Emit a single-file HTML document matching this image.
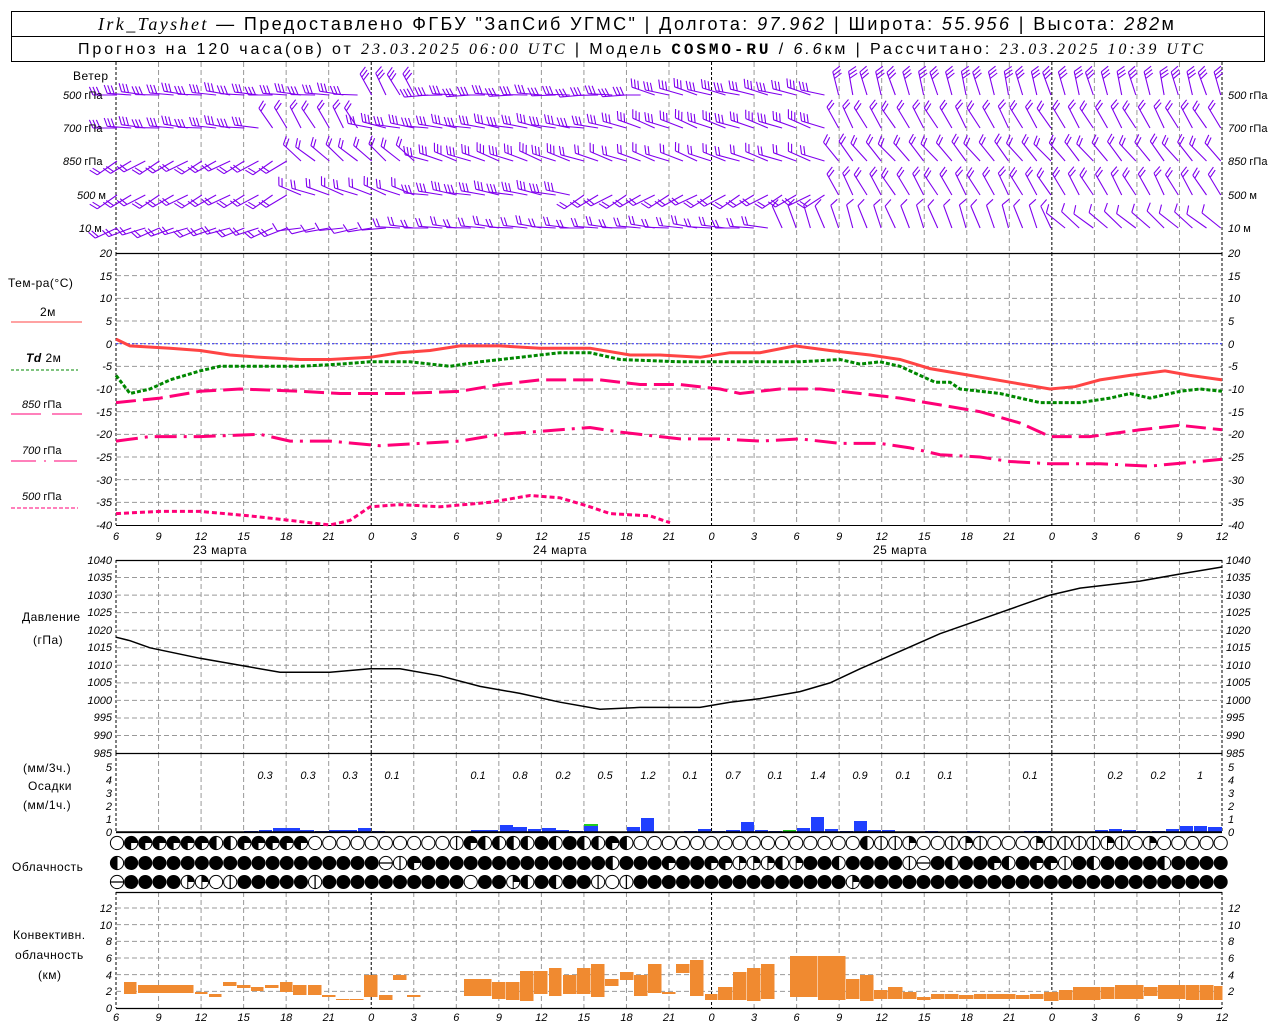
<!DOCTYPE html>
<html><head><meta charset="utf-8">
<style>
html,body{margin:0;padding:0;background:#fff;}
svg{display:block;font-family:"Liberation Sans",sans-serif;}
.t{font-size:11px;font-style:italic;fill:#000;}
.l{font-size:12px;fill:#000;letter-spacing:0.5px;}
</style></head><body>
<svg id="s" width="1280" height="1024" viewBox="0 0 1280 1024" xmlns="http://www.w3.org/2000/svg">
<rect x="0" y="0" width="1280" height="1024" fill="#fff"/>
<!-- header -->
<rect x="11.5" y="11.5" width="1253" height="50" fill="none" stroke="#000"/>
<line x1="11" y1="36.5" x2="1265" y2="36.5" stroke="#000"/>
<text x="98" y="30" font-size="18" fill="#000" letter-spacing="2.4"><tspan font-family="Liberation Serif" font-style="italic">Irk_Tayshet</tspan> — Предоставлено ФГБУ "ЗапСиб УГМС" | Долгота: <tspan font-style="italic">97.962</tspan> | Широта: <tspan font-style="italic">55.956</tspan> | Высота: <tspan font-style="italic">282</tspan>м</text>
<text x="78" y="54" font-size="16" fill="#000" letter-spacing="2.9">Прогноз на 120 часа(ов) от <tspan font-family="Liberation Serif" font-style="italic">23.03.2025 06:00 UTC</tspan>  | Модель <tspan font-family="Liberation Mono" font-weight="bold">COSMO-RU</tspan> / <tspan font-style="italic">6.6</tspan>км | Рассчитано: <tspan font-family="Liberation Serif" font-style="italic">23.03.2025 10:39 UTC</tspan></text>
<g id="grid"></g>
<g id="data"></g>
<!-- wind labels -->
<text class="l" x="73" y="80">Ветер</text>
<g class="t"><text x="63" y="99">500 <tspan font-style="normal">гПа</tspan></text><text x="63" y="132">700 <tspan font-style="normal">гПа</tspan></text><text x="63" y="165">850 <tspan font-style="normal">гПа</tspan></text><text x="77" y="199">500 <tspan font-style="normal">м</tspan></text><text x="79" y="232">10 <tspan font-style="normal">  м</tspan></text>
<text x="1228" y="99">500 <tspan font-style="normal">гПа</tspan></text><text x="1228" y="132">700 <tspan font-style="normal">гПа</tspan></text><text x="1228" y="165">850 <tspan font-style="normal">гПа</tspan></text><text x="1228" y="199">500 <tspan font-style="normal">м</tspan></text><text x="1228" y="232">10 <tspan font-style="normal">  м</tspan></text></g>
<!-- temp labels -->
<text class="l" x="8" y="287">Тем-ра(°C)</text>
<text class="l" x="40" y="316" font-size="11">2м</text>
<line x1="11" y1="322" x2="82" y2="322" stroke="#f44"/>
<text class="l" x="26" y="362" font-size="11"><tspan font-style="italic" font-weight="bold">Td</tspan>  2м</text>
<line x1="11" y1="370" x2="78" y2="370" stroke="#080" stroke-dasharray="3,2"/>
<text class="t" x="22" y="408">850 <tspan font-style="normal">гПа</tspan></text>
<line x1="11" y1="414" x2="41" y2="414" stroke="#f07"/><line x1="52" y1="414" x2="82" y2="414" stroke="#f07"/>
<text class="t" x="22" y="454">700 <tspan font-style="normal">гПа</tspan></text>
<line x1="11" y1="461" x2="77" y2="461" stroke="#f07" stroke-dasharray="25,8,2,8"/>
<text class="t" x="22" y="500">500 <tspan font-style="normal">гПа</tspan></text>
<line x1="11" y1="508" x2="78" y2="508" stroke="#f07" stroke-dasharray="4,2"/>
<g class="t" text-anchor="end"><text x="112" y="257">20</text><text x="112" y="280">15</text><text x="112" y="302">10</text><text x="112" y="325">5</text><text x="112" y="348">0</text><text x="112" y="370">-5</text><text x="112" y="393">-10</text><text x="112" y="416">-15</text><text x="112" y="438">-20</text><text x="112" y="461">-25</text><text x="112" y="484">-30</text><text x="112" y="506">-35</text><text x="112" y="529">-40</text></g>
<g class="t"><text x="1228" y="257">20</text><text x="1228" y="280">15</text><text x="1228" y="302">10</text><text x="1228" y="325">5</text><text x="1228" y="348">0</text><text x="1228" y="370">-5</text><text x="1228" y="393">-10</text><text x="1228" y="416">-15</text><text x="1228" y="438">-20</text><text x="1228" y="461">-25</text><text x="1228" y="484">-30</text><text x="1228" y="506">-35</text><text x="1228" y="529">-40</text></g>
<g class="t" font-size="14" text-anchor="middle"><text x="116" y="540">6</text><text x="158.5" y="540">9</text><text x="201" y="540">12</text><text x="243.6" y="540">15</text><text x="286.2" y="540">18</text><text x="328.7" y="540">21</text><text x="371.2" y="540">0</text><text x="413.8" y="540">3</text><text x="456.3" y="540">6</text><text x="498.9" y="540">9</text><text x="541.4" y="540">12</text><text x="583.9" y="540">15</text><text x="626.5" y="540">18</text><text x="669" y="540">21</text><text x="711.6" y="540">0</text><text x="754.1" y="540">3</text><text x="796.6" y="540">6</text><text x="839.2" y="540">9</text><text x="881.7" y="540">12</text><text x="924.3" y="540">15</text><text x="966.8" y="540">18</text><text x="1009.3" y="540">21</text><text x="1051.9" y="540">0</text><text x="1094.4" y="540">3</text><text x="1137" y="540">6</text><text x="1179.5" y="540">9</text><text x="1222" y="540">12</text></g>
<g class="l" font-size="13" text-anchor="middle" letter-spacing="1.5"><text x="220" y="554">23 марта</text><text x="560" y="554">24 марта</text><text x="900" y="554">25 марта</text></g>
<!-- pressure -->
<text class="l" x="22" y="621">Давление</text><text class="l" x="33" y="644">(гПа)</text>
<g class="t" font-size="10" text-anchor="end"><text x="112" y="564">1040</text><text x="112" y="581">1035</text><text x="112" y="599">1030</text><text x="112" y="616">1025</text><text x="112" y="634">1020</text><text x="112" y="651">1015</text><text x="112" y="669">1010</text><text x="112" y="686">1005</text><text x="112" y="704">1000</text><text x="112" y="721">995</text><text x="112" y="739">990</text><text x="112" y="757">985</text></g>
<g class="t" font-size="10"><text x="1226" y="564">1040</text><text x="1226" y="581">1035</text><text x="1226" y="599">1030</text><text x="1226" y="616">1025</text><text x="1226" y="634">1020</text><text x="1226" y="651">1015</text><text x="1226" y="669">1010</text><text x="1226" y="686">1005</text><text x="1226" y="704">1000</text><text x="1226" y="721">995</text><text x="1226" y="739">990</text><text x="1226" y="757">985</text></g>
<!-- precip -->
<text class="l" x="23" y="772">(мм/3ч.)</text><text class="l" x="28" y="790">Осадки</text><text class="l" x="23" y="809">(мм/1ч.)</text>
<g class="t" font-size="10" text-anchor="end"><text x="112" y="771">5</text><text x="112" y="784">4</text><text x="112" y="797">3</text><text x="112" y="810">2</text><text x="112" y="823">1</text><text x="112" y="836">0</text></g>
<g class="t" font-size="10"><text x="1228" y="771">5</text><text x="1228" y="784">4</text><text x="1228" y="797">3</text><text x="1228" y="810">2</text><text x="1228" y="823">1</text><text x="1228" y="836">0</text></g>
<g class="t" font-size="13" text-anchor="middle"><text x="265" y="779">0.3</text><text x="308" y="779">0.3</text><text x="350" y="779">0.3</text><text x="392" y="779">0.1</text><text x="478" y="779">0.1</text><text x="520" y="779">0.8</text><text x="563" y="779">0.2</text><text x="605" y="779">0.5</text><text x="648" y="779">1.2</text><text x="690" y="779">0.1</text><text x="733" y="779">0.7</text><text x="775" y="779">0.1</text><text x="818" y="779">1.4</text><text x="860" y="779">0.9</text><text x="903" y="779">0.1</text><text x="945" y="779">0.1</text><text x="1030" y="779">0.1</text><text x="1115" y="779">0.2</text><text x="1158" y="779">0.2</text><text x="1200" y="779">1</text></g>
<text class="l" x="12" y="871">Облачность</text>
<!-- conv -->
<text class="l" x="13" y="939">Конвективн.</text><text class="l" x="15" y="959">облачность</text><text class="l" x="38" y="979">(км)</text>
<g class="t" font-size="10" text-anchor="end"><text x="112" y="912">12</text><text x="112" y="929">10</text><text x="112" y="945">8</text><text x="112" y="962">6</text><text x="112" y="979">4</text><text x="112" y="995">2</text><text x="112" y="1012">0</text></g>
<g class="t" font-size="10"><text x="1228" y="912">12</text><text x="1228" y="929">10</text><text x="1228" y="945">8</text><text x="1228" y="962">6</text><text x="1228" y="979">4</text><text x="1228" y="995">2</text></g>
<g class="t" font-size="14" text-anchor="middle"><text x="116" y="1021">6</text><text x="158.5" y="1021">9</text><text x="201" y="1021">12</text><text x="243.6" y="1021">15</text><text x="286.2" y="1021">18</text><text x="328.7" y="1021">21</text><text x="371.2" y="1021">0</text><text x="413.8" y="1021">3</text><text x="456.3" y="1021">6</text><text x="498.9" y="1021">9</text><text x="541.4" y="1021">12</text><text x="583.9" y="1021">15</text><text x="626.5" y="1021">18</text><text x="669" y="1021">21</text><text x="711.6" y="1021">0</text><text x="754.1" y="1021">3</text><text x="796.6" y="1021">6</text><text x="839.2" y="1021">9</text><text x="881.7" y="1021">12</text><text x="924.3" y="1021">15</text><text x="966.8" y="1021">18</text><text x="1009.3" y="1021">21</text><text x="1051.9" y="1021">0</text><text x="1094.4" y="1021">3</text><text x="1137" y="1021">6</text><text x="1179.5" y="1021">9</text><text x="1222" y="1021">12</text></g>
</svg>
<script>
(function(){
var NS="http://www.w3.org/2000/svg",G=document.getElementById('grid'),D=document.getElementById('data');
function el(p,t,a){var e=document.createElementNS(NS,t);for(var k in a)e.setAttribute(k,a[k]);p.appendChild(e);return e;}
function ln(p,x1,y1,x2,y2,c,w,da){var a={x1:x1,y1:y1,x2:x2,y2:y2,stroke:c,'stroke-width':w||1};if(da)a['stroke-dasharray']=da;return el(p,'line',a);}
var X0=116,X1=1222,DX=(X1-X0)/26;
var panels=[[62,253],[253,525],[560,753],[753,832],[892,1008]];
for(var k=0;k<=26;k++){var x=X0+k*DX;
 panels.forEach(function(p){ if(k%8==6){ln(G,x,p[0],x,p[1],'#000',1,'3,2');} else if(k==0||k==26){ln(G,x,p[0],x,p[1],'#000',1,'3,2');} else ln(G,x,p[0],x,p[1],'#999',1,'5,3');});
}
for(var t=15;t>=-35;t-=5){var y=253+(20-t)*4.533;ln(G,X0,y,X1,y,'#999',1,'5,3');}
for(var i=1;i<11;i++){var y=560+i*17.55;ln(G,X0,y,X1,y,'#999',1,'5,3');}
for(var i=1;i<7;i++){var y=1008-i*16.67;ln(G,X0,y,X1,y,'#999',1,'5,3');}
[253,560,753,832,892,1008].forEach(function(y){ln(G,X0,y+0.5,X1,y+0.5,'#000',1.3);});
ln(G,X0,525.5,X1,525.5,'#000',1);
ln(D,X0,343.7,X1,343.7,'#33f',1,'2,2');
function poly(pts,fy,c,w,da){var s=pts.map(function(p){return p[0]+','+fy(p[1]).toFixed(1);}).join(' ');var a={points:s,fill:'none',stroke:c,'stroke-width':w};if(da)a['stroke-dasharray']=da;el(D,'polyline',a);}
var ty=function(t){return 253+(20-t)*4.533;};
poly([[116,1],[130,-0.5],[170,-1],[200,-1.5],[230,-2.5],[260,-3],[300,-3.5],[330,-3.5],[370,-3],[400,-2],[430,-1.5],[460,-0.5],[500,-0.5],[540,-1],[590,-1],[630,-2.5],[660,-2.5],[700,-3],[730,-2],[760,-2],[795,-0.5],[830,-1.5],[870,-2.5],[900,-3.5],[930,-5.5],[970,-7],[1010,-8.5],[1050,-10],[1075,-9.5],[1100,-8],[1130,-7],[1165,-6],[1190,-7],[1222,-8]],ty,'#f44',3);
poly([[116,-7],[130,-11],[150,-10],[170,-8],[200,-6],[220,-5],[260,-5],[300,-5],[340,-4.5],[370,-4],[410,-4],[450,-5],[480,-4],[520,-3],[560,-2],[590,-2],[620,-3.5],[680,-4],[720,-4],[760,-4],[800,-4],[840,-3.5],[860,-4.5],[880,-4],[900,-5],[920,-7],[935,-8.5],[950,-8.5],[960,-10],[1000,-11],[1040,-13],[1080,-13],[1110,-12],[1130,-11],[1150,-12],[1180,-10.5],[1200,-10],[1222,-10.5]],ty,'#080',3,'4,2');
poly([[116,-13],[160,-12],[200,-10.5],[240,-10],[300,-10.5],[340,-11],[400,-11],[460,-10.5],[500,-9],[540,-8],[600,-8],[640,-9],[680,-9],[720,-10],[740,-11],[780,-10],[820,-10],[860,-11],[900,-12],[940,-13.5],[980,-15],[1020,-17.5],[1050,-20.5],[1090,-20.5],[1140,-19],[1180,-18],[1222,-19]],ty,'#f07',3,'20,7');
poly([[116,-21.5],[150,-20.5],[200,-20.5],[260,-20],[290,-21.5],[330,-21.5],[380,-22.5],[420,-22],[460,-21.5],[500,-20],[560,-19],[590,-18.5],[620,-19.5],[680,-21],[720,-21],[760,-21.5],[800,-21],[840,-22],[880,-22],[910,-23],[940,-24.5],[980,-25],[1010,-26],[1050,-26.5],[1100,-26.5],[1150,-27],[1222,-25.5]],ty,'#f07',3,'22,7,3,7');
poly([[116,-37.5],[160,-37],[200,-37],[250,-38],[290,-39],[330,-40],[350,-39],[370,-36],[400,-35.5],[440,-36],[490,-35],[530,-33.5],[560,-34],[590,-36],[610,-37.5],[650,-38],[670,-39.5]],ty,'#f07',3,'5,3');
poly([[116,1018],[130,1017],[150,1015],[200,1012],[240,1010],[280,1008],[330,1008],[370,1009],[400,1009],[440,1007],[480,1004],[520,1002],[560,999.5],[600,997.5],[640,998],[700,998],[730,999.5],[760,1000.5],[800,1002.5],[830,1005],[860,1009],[900,1014],[940,1019],[980,1023],[1020,1027],[1050,1030],[1080,1032],[1110,1033],[1140,1034],[1180,1036],[1222,1038]],function(p){return 560+(1040-p)*3.51;},'#000',1.5);
var pb=[[244,258,831],[259,272,830],[273,300,828],[300,314,830],[315,329,831],[329,343,830],[343,357,830],[358,371,828],[372,385,831],[471,485,830],[485,498,830],[500,513,825],[513,527,827],[528,541,829],[542,556,828],[556,569,830],[570,583,831],[584,598,826],[627,640,827],[641,654,818],[684,697,831],[698,711,829],[712,725,831],[726,740,830],[741,754,822],[755,768,830],[769,782,831],[797,810,828],[811,824,817],[825,838,829],[840,853,831],[854,867,821],[868,881,830],[882,895,830],[925,938,831],[967,980,831],[1024,1037,831],[1038,1051,831],[1095,1108,830],[1109,1122,829],[1123,1136,830],[1137,1150,831],[1152,1165,831],[1166,1179,829],[1180,1193,826],[1194,1207,826],[1208,1222,827]];
pb.forEach(function(b){el(D,'rect',{x:b[0],y:b[2],width:b[1]-b[0],height:832-b[2],fill:'#2040ff'});});
el(D,'rect',{x:584,y:824,width:14,height:2,fill:'#2c2'});
el(D,'rect',{x:783,y:830,width:13,height:2,fill:'#2c2'});
ln(D,X0,832,X1,832,'#000',1.5);
var cb=[[124,137,982,994],[138,194,985,993],[195,208,992,994],[209,222,994,997],[223,237,982,986],[237,251,985,988],[251,264,987,991],[265,279,985,988],[280,293,982,992],[293,307,985,995],[308,322,985,995],[322,336,995,997],[336,350,999,1000],[350,364,999,1000],[364,378,975,997],[379,393,995,1000],[393,407,975,980],[407,421,995,997],[464,492,979,996],[492,506,982,999],[506,520,982,1000],[520,534,971,1001],[534,548,971,994],[549,562,968,996],[563,577,975,994],[577,591,968,994],[591,605,964,997],[605,619,979,986],[620,634,972,980],[634,648,975,996],[648,662,964,993],[662,676,992,994],[676,690,964,973],[690,704,960,996],[705,718,994,1000],[718,733,987,1000],[733,747,972,1000],[747,761,968,1001],[761,775,964,999],[790,818,956,997],[818,846,956,1000],[846,860,979,999],[860,874,975,1001],[874,888,990,999],[888,903,987,999],[903,917,992,999],[917,931,997,1000],[931,945,994,999],[945,959,994,999],[959,974,995,999],[974,987,994,999],[987,1016,994,999],[1016,1030,995,999],[1030,1044,994,999],[1044,1059,992,1001],[1059,1073,990,1000],[1073,1101,987,1000],[1101,1115,987,999],[1115,1144,985,999],[1144,1158,987,996],[1158,1186,985,999],[1186,1200,985,1000],[1200,1214,985,1000],[1214,1223,986,1000]];
cb.forEach(function(b){el(D,'rect',{x:b[0],y:b[2],width:b[1]-b[0]-0.5,height:b[3]-b[2],fill:'#f08a30'});});
var rows=["otttttthhtttttoooooooooovthhhhxhxhhthoooooooooooooooohvvqoovqvoooqvvvvqvoqoooooooo",
"hxxxxxxxxxxxxxxxxxxevtxxxxxxxxxxxxxhxxxtxxttqqqhqxxhxxxxvexhxxthxttvxhxxxxhxxxxxx",
"exxxxqqovxxxxxvxxxxxxxxxxoxxqhxhxxvovxxxxxxxxxxxxxxxqxxxxxxxxxxxxxxxxxxxxxxxxxx"];
var ry=[843,863,882];
for(var r=0;r<3;r++){for(var i=0;i<79;i++){var cx=117+i*14.15,cy=ry[r],R=6.6,c=rows[r].charAt(i)||'x';
 var g=el(D,'g',{});
 if(c=='x'){el(g,'circle',{cx:cx,cy:cy,r:R+0.4,fill:'#000'});continue;}
 el(g,'circle',{cx:cx,cy:cy,r:R,fill:'#fff',stroke:'#000','stroke-width':1});
 if(c=='v')ln(g,cx,cy-R,cx,cy+R,'#000',1.3);
 if(c=='e')ln(g,cx-R,cy,cx+R,cy,'#000',1.3);
 if(c=='h'){el(g,'path',{d:'M'+cx+','+(cy-R)+' A'+R+','+R+' 0 0 0 '+cx+','+(cy+R)+' Z',fill:'#000'});ln(g,cx,cy-R,cx,cy+R,'#000',1);}
 if(c=='q'){el(g,'path',{d:'M'+cx+','+cy+' L'+cx+','+(cy-R)+' A'+R+','+R+' 0 0 1 '+(cx+R)+','+cy+' Z',fill:'#000'});ln(g,cx,cy-R,cx,cy+R,'#000',1);}
 if(c=='t'){el(g,'path',{d:'M'+cx+','+cy+' L'+cx+','+(cy+R)+' A'+R+','+R+' 0 1 1 '+(cx+R)+','+cy+' Z',fill:'#000'});}
}}
var lv=[[95,[[360,185,3],[420,240,3],[650,180,3],[830,195,3],[1300,255,3]]],
[128,[[260,185,3],[370,240,2],[620,190,3],[830,200,3],[1300,240,2]]],
[161,[[290,150,2],[420,220,2],[580,200,3],[830,200,2],[1300,230,2]]],
[195,[[290,150,2],[420,200,2],[580,190,3],[830,150,2],[1300,240,2]]],
[228,[[300,160,2],[400,170,1],[780,185,2],[1060,250,1],[1300,220,1]]]];
var W=el(D,'g',{stroke:'#8000ee','stroke-width':1.1,fill:'none'});
lv.forEach(function(L){var y=L[0];for(var i=0;i<79;i++){var x=117+i*14.15,s=null;
 for(var j=0;j<L[1].length;j++){if(x<L[1][j][0]){s=L[1][j];break;}}
 var a=(s[1]+((i*37)%11-5))*Math.PI/180,dx=Math.cos(a),dy=Math.sin(a),len=24;
 var ex=x+dx*len,ey=y+dy*len;var d='M'+x.toFixed(1)+','+y.toFixed(1)+'L'+ex.toFixed(1)+','+ey.toFixed(1);
 var px=-dy,py=dx;
 for(var b=0;b<s[2];b++){var bx=ex-dx*b*3.5,by=ey-dy*b*3.5;d+='M'+bx.toFixed(1)+','+by.toFixed(1)+'l'+((px*0.9+dx*0.4)*9).toFixed(1)+','+((py*0.9+dy*0.4)*9).toFixed(1);}
 el(W,'path',{d:d});}});
})();
</script>
</body></html>
